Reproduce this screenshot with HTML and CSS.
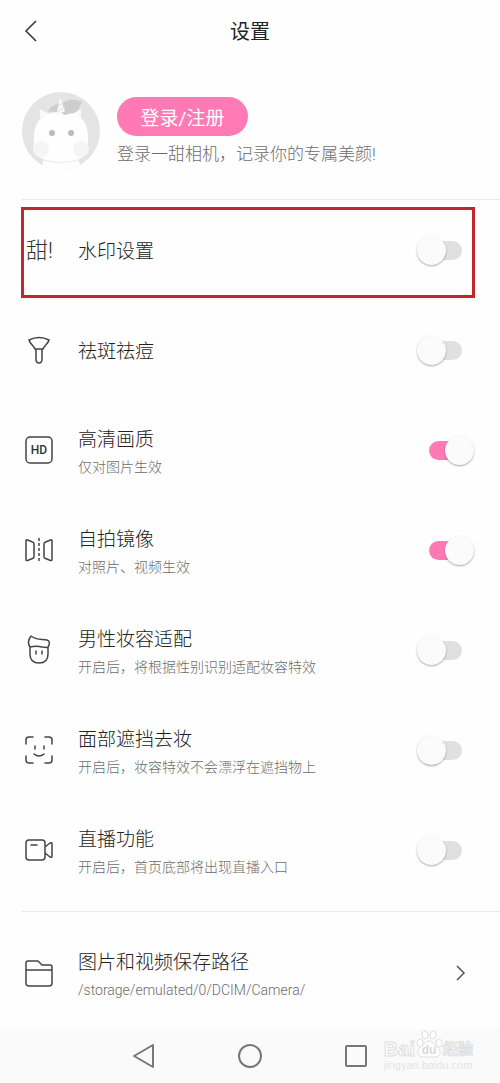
FILE: index.html
```html
<!DOCTYPE html>
<html lang="zh-CN">
<head>
<meta charset="utf-8">
<meta name="viewport" content="width=device-width, initial-scale=1">
<title>设置</title>
<link rel="stylesheet" href="styles.css">
</head>
<body>
<header class="topbar">
  <button class="back" type="button" aria-label="返回"><svg width="14" height="24" viewBox="0 0 14 24"><path d="M12 2 2 12l10 10"/></svg></button>
  <h1 class="title">设置</h1>
</header>
<main class="content">
  <section class="profile">
    <svg class="avatar" viewBox="0 0 78 78" aria-hidden="true">
      <defs><clipPath id="disc"><circle cx="39" cy="39" r="39"/></clipPath></defs>
      <g clip-path="url(#disc)">
        <rect width="78" height="78" fill="#e4e4e4"/>
        <path d="M19 78 22 66h34l4 12z" fill="#fefefe"/>
        <path d="M18 26v-9l9 5zM59 26v-9l-9 5z" fill="#fafafa"/>
        <path d="M12 45c0-17 10-25 27-25s27 8 27 25v10c0 10-11 15-27 15S12 65 12 55z" fill="#fefefe"/>
        <path d="M22 68q17 5 34 0" fill="none" stroke="#e9e9e9"/>
        <path d="M26 20c2-6 9-9 15-9 4-4 10-5 20-1-3 2-3 5-5 8-3 4-8 3-13 5-4-3-10-4-17-3z" fill="#cdcdcd"/>
        <path d="m34 24 4-19 5 14z" fill="#f7f7f7"/>
        <path d="m36 14 5-3m-6 9 8-5" stroke="#dedede"/>
        <circle cx="30" cy="41" r="3" fill="#bbb"/><circle cx="49" cy="41" r="3" fill="#bbb"/>
        <circle cx="19" cy="57" r="8" fill="#f5f5f5"/><circle cx="59" cy="57" r="8" fill="#f5f5f5"/>
      </g>
    </svg>
    <div class="account">
      <button class="login" type="button">登录/注册</button>
      <p class="tip">登录一甜相机，记录你的专属美颜!</p>
    </div>
  </section>
  <hr class="divider">
  <label class="row highlighted">
    <svg class="icon" viewBox="0 0 28 28"><text class="sweet" x="1" y="22">甜!</text></svg>
    <span class="text"><span class="name">水印设置</span></span>
    <input class="switch" type="checkbox">
  </label>
  <label class="row">
    <svg class="icon" viewBox="0 0 28 28"><path d="M4 4q10-5 20 0c-1 4-5 6-6 9h-8c-1-3-5-5-6-9zM10 13h8M11 13v10q0 4 3 4t3-4V13"/></svg>
    <span class="text"><span class="name">祛斑祛痘</span></span>
    <input class="switch" type="checkbox">
  </label>
  <label class="row">
    <svg class="icon" viewBox="0 0 28 28"><rect x="1" y="1" width="26" height="26" rx="4"/><text class="hd" x="14" y="18">HD</text></svg>
    <span class="text stacked"><span class="name">高清画质</span><span class="note">仅对图片生效</span></span>
    <input class="switch" type="checkbox" checked>
  </label>
  <label class="row">
    <svg class="icon" viewBox="0 0 28 28"><path d="M1 4.500v19q0 1.500 1.500 1l5-2Q9 22 9 20.500V8Q9 6.500 7.500 6l-5-2Q1 3.500 1 4.500zM27 4.500v19q0 1.500-1.500 1l-5-2Q19 22 19 20.500V8q0-1.500 1.500-2l5-2Q27 3.500 27 4.500z"/><path d="M14 2v24" stroke-dasharray="3 2" stroke-linecap="butt"/></svg>
    <span class="text stacked"><span class="name">自拍镜像</span><span class="note">对照片、视频生效</span></span>
    <input class="switch" type="checkbox" checked>
  </label>
  <label class="row">
    <svg class="icon" viewBox="0 0 28 28"><path d="M6 0c-3 4-3 8-1 11 5-1 8-1 12 0 3 0 5 1 6 0 2-3 2-6-1-7-6-1-11 0-16-4zM5 11v7c0 7 4 9 9 9s9-2 9-9v-7M11 15v3M17 15v3"/></svg>
    <span class="text stacked"><span class="name">男性妆容适配</span><span class="note">开启后，将根据性别识别适配妆容特效</span></span>
    <input class="switch" type="checkbox">
  </label>
  <label class="row">
    <svg class="icon" viewBox="0 0 28 28"><path d="M1 8V4q0-3 3-3h4M20 1h4q3 0 3 3v4M27 20v4q0 3-3 3h-4M8 27H4q-3 0-3-3v-4M10 10v3M19 10v3M9 18q5 4 10 0"/></svg>
    <span class="text stacked"><span class="name">面部遮挡去妆</span><span class="note">开启后，妆容特效不会漂浮在遮挡物上</span></span>
    <input class="switch" type="checkbox">
  </label>
  <label class="row">
    <svg class="icon" viewBox="0 0 28 28"><path d="M20 11V7q0-3-3-3H4Q1 4 1 7v14q0 3 3 3h13q3 0 3-3v-4l5 4q2 1 2-1V8q0-2-2-1l-5 4v6M6 9h6"/></svg>
    <span class="text stacked"><span class="name">直播功能</span><span class="note">开启后，首页底部将出现直播入口</span></span>
    <input class="switch" type="checkbox">
  </label>
  <hr class="divider spaced">
  <a class="row spaced" href="#path">
    <svg class="icon" viewBox="0 0 28 28"><path d="M1 11V4q0-2 2-2h10l4 4h8q2 0 2 2v16q0 3-3 3H4q-3 0-3-3V11h26"/></svg>
    <span class="text stacked"><span class="name">图片和视频保存路径</span><span class="note">/storage/emulated/0/DCIM/Camera/</span></span>
    <svg class="chevron" width="10" height="16" viewBox="0 0 10 16"><path d="m1 1 7 7-7 7"/></svg>
  </a>
</main>
<nav class="navbar">
  <button type="button" aria-label="返回键"><svg width="24" height="24" viewBox="0 0 24 24"><path d="M21 1v22L2 12z"/></svg></button>
  <button type="button" aria-label="主屏幕"><svg width="24" height="24" viewBox="0 0 24 24"><circle cx="12" cy="12" r="11"/></svg></button>
  <button type="button" aria-label="最近任务"><svg width="24" height="24" viewBox="0 0 24 24"><rect x="2" y="2" width="20" height="20" rx="1"/></svg></button>
  <div class="watermark">
    <div class="brand"><span>Bai</span><svg width="28" height="28" viewBox="0 0 28 28"><path d="M14 11c-4 0-5 4-8 6-5 4-4 10 2 10h12c6 0 7-6 2-10-3-2-4-6-8-6z"/><ellipse cx="5" cy="13" rx="3" ry="4"/><ellipse cx="10" cy="5" rx="3" ry="4"/><ellipse cx="18" cy="5" rx="3" ry="4"/><ellipse cx="24" cy="13" rx="3" ry="4"/><text x="14" y="24">du</text></svg><span class="cn">经验</span></div>
    <div class="site">jingyan.baidu.com</div>
  </div>
</nav>
</body>
</html>
```
FILE: styles.css
```css
* { box-sizing: border-box; }

body {
  margin: 0;
  min-height: 100vh;
  display: flex;
  flex-direction: column;
  background: #fefefe;
  color: #222;
  font-family: Roboto, "Noto Sans CJK SC", sans-serif;
  font-weight: 300;
}

button {
  padding: 0;
  border: 0;
  background: none;
  font: inherit;
}

svg {
  display: block;
  flex: none;
  fill: none;
}

.topbar {
  display: grid;
  grid-template-columns: 60px 1fr 60px;
  align-items: center;
  height: 62px;
}

.back { padding-left: 24px; }
.back svg { stroke: #333; stroke-width: 1.5; }

.title {
  margin: 0;
  padding-top: 2px;
  text-align: center;
  font-size: 20px;
  line-height: 28px;
  font-weight: 400;
}

.content { flex: 1; }

.profile {
  display: flex;
  gap: 17px;
  height: 137px;
  padding: 30px 22px 0;
}

.avatar { width: 78px; height: 78px; }
.account { padding-top: 5px; }

.login {
  width: 131px;
  height: 39px;
  border-radius: 20px;
  background: #ff7ab5;
  color: #fff;
  font-size: 19px;
  font-weight: 400;
}

.tip {
  margin: 6px 0 0;
  font-size: 17px;
  line-height: 24px;
  color: #6c6c6c;
  white-space: nowrap;
}

.divider {
  height: 1px;
  margin: 0 0 0 22px;
  border: 0;
  background: #e8e8e8;
}

.spaced { margin-top: 11px; }

.row {
  position: relative;
  display: flex;
  align-items: center;
  gap: 25px;
  height: 100px;
  padding: 0 26px 0 25px;
  color: inherit;
  text-decoration: none;
}

.highlighted::after {
  content: "";
  position: absolute;
  inset: 7px 25px 2px 21px;
  border: 3px solid #c1272d;
}

.icon {
  width: 28px;
  height: 28px;
  overflow: visible;
  stroke: #444;
  stroke-width: 1.5;
  stroke-linecap: round;
  stroke-linejoin: round;
}

.icon text { fill: #333; stroke: none; }
.hd { font-size: 12px; font-weight: 500; text-anchor: middle; }
.sweet { font-size: 22px; font-weight: 300; }

.text {
  flex: 1;
  display: flex;
  flex-direction: column;
  padding-top: 4px;
}

.stacked { padding-top: 5px; }
.name { font-size: 19px; line-height: 28px; }
.note { font-size: 14px; line-height: 26px; color: #6c6c6c; }

.switch {
  appearance: none;
  position: relative;
  display: flex;
  align-items: center;
  width: 57px;
  height: 29px;
  margin: 0;
}

.switch::before {
  content: "";
  width: 33px;
  height: 19px;
  margin: 0 12px;
  border-radius: 10px;
  background: #e0e0e0;
}

.switch::after {
  content: "";
  position: absolute;
  left: 0;
  width: 29px;
  height: 29px;
  border-radius: 50%;
  background: #fbfbfb;
  box-shadow: 0 1px 2px #0005;
}

.switch:checked::before { background: #ff7ab5; }
.switch:checked::after { left: auto; right: 0; }

.chevron { margin-right: 8px; stroke: #555; stroke-width: 1.5; }

.navbar {
  position: relative;
  display: flex;
  justify-content: center;
  gap: 82px;
  height: 54px;
  background: #fafafa;
}

.navbar button svg { stroke: #777; stroke-width: 2; stroke-linejoin: round; }

.watermark {
  position: absolute;
  right: 27px;
  top: 0;
  color: #fff;
  font-family: "Liberation Sans", "Noto Sans CJK SC", sans-serif;
  -webkit-text-stroke: 1px #dedede;
}

.brand {
  display: flex;
  align-items: center;
  height: 30px;
  font-size: 20px;
  line-height: 30px;
  font-weight: 700;
}

.brand span { padding-top: 10px; }
.brand svg { stroke: #dedede; fill: #fff; }
.brand text { font-size: 12px; text-anchor: middle; stroke: none; fill: #d8d8d8; -webkit-text-stroke: 0; }
.brand .cn { font-size: 15px; }

.site {
  font-size: 11px;
  line-height: 12px;
  -webkit-text-stroke: 0;
  color: #e4e4e4;
}
```
